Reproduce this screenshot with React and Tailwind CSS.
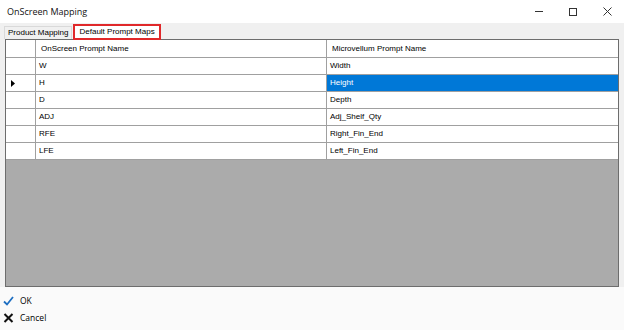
import React from 'react';

const rows = [
  ['W', 'Width'],
  ['H', 'Height'],
  ['D', 'Depth'],
  ['ADJ', 'Adj_Shelf_Qty'],
  ['RFE', 'Right_Fin_End'],
  ['LFE', 'Left_Fin_End'],
];

export default function App() {
  const selected = 1;

  return (
    <div className="w-[624px] h-[330px] bg-[#f0f0f0] flex flex-col overflow-hidden text-black font-['Liberation_Sans',Arial,sans-serif]">
      {/* Title bar */}
      <div className="h-[23px] bg-white flex items-center shrink-0">
        <span className="flex-1 pl-[7px] text-[9px] font-['Open_Sans','Noto_Sans',sans-serif] text-[#111]">
          OnScreen Mapping
        </span>
        <div className="w-[34px] h-full flex items-center justify-center">
          <div className="w-[8px] h-px bg-[#333]" />
        </div>
        <div className="w-[34px] h-full flex items-center justify-center">
          <div className="w-[8px] h-[8px] border border-[#333]" />
        </div>
        <div className="w-[34px] h-full flex items-center justify-center">
          <svg width="9" height="9" viewBox="0 0 9 9">
            <path d="M0.5 0.5 L8.5 8.5 M8.5 0.5 L0.5 8.5" stroke="#333" strokeWidth="1" />
          </svg>
        </div>
      </div>

      {/* Tabs */}
      <div className="h-[16px] flex items-end pl-[4px] shrink-0 text-[8px] text-black">
        <div className="h-[13px] px-[3px] flex items-center border border-b-0 border-[#d9d9d9] bg-[#f0f0f0]">
          Product Mapping
        </div>
        <div className="h-[16px] ml-px px-[4px] flex items-center bg-white border-2 border-[#e0282a] -mb-px relative">
          Default Prompt Maps
        </div>
      </div>

      {/* Grid */}
      <div className="mx-[5px] h-[248px] shrink-0 border border-[#6d6d6d] bg-[#ababab] flex flex-col text-[8px] text-black">
        <div className="grid grid-cols-[30px_291px_1fr] h-[18px] bg-white border-b border-[#a0a0a0]">
          <div className="border-r border-[#a0a0a0]" />
          <div className="border-r border-[#a0a0a0] flex items-center pl-[5px]">OnScreen Prompt Name</div>
          <div className="flex items-center pl-[5px]">Microvellum Prompt Name</div>
        </div>
        {rows.map(([a, b], i) => (
          <div key={a} className="grid grid-cols-[30px_291px_1fr] h-[17px] bg-white border-b border-[#a0a0a0]">
            <div className="border-r border-[#a0a0a0] flex items-center pl-[5px]">
              {i === selected && (
                <svg width="4" height="7" viewBox="0 0 4 7">
                  <path d="M0 0 L4 3.5 L0 7 Z" fill="#000" />
                </svg>
              )}
            </div>
            <div className="border-r border-[#a0a0a0] flex items-center pl-[3px] text-black">{a}</div>
            <div
              className={
                i === selected
                  ? 'flex items-center pl-[3px] bg-[#0078d7] text-white'
                  : 'flex items-center pl-[3px] text-black'
              }
            >
              {b}
            </div>
          </div>
        ))}
      </div>

      {/* Bottom buttons */}
      <div className="flex-1 bg-[#fafafa] flex flex-col pt-[6px] pl-[3px] gap-[1px] text-[8.5px] font-['Open_Sans','Noto_Sans',sans-serif]">
        <div className="flex items-center h-[16px] gap-[6px]">
          <svg width="11" height="10" viewBox="0 0 11 10">
            <path d="M1 5.5 L4 8.5 L10 1" stroke="#1e6fc2" strokeWidth="1.8" fill="none" />
          </svg>
          <span>OK</span>
        </div>
        <div className="flex items-center h-[16px] gap-[6px]">
          <svg width="11" height="10" viewBox="0 0 11 10">
            <path d="M1.5 1 L9.5 9 M9.5 1 L1.5 9" stroke="#111" strokeWidth="2" fill="none" />
          </svg>
          <span>Cancel</span>
        </div>
      </div>
    </div>
  );
}
